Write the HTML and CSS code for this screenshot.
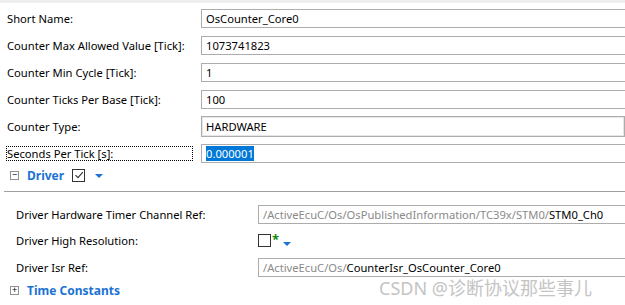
FILE: index.html
```html
<!DOCTYPE html>
<html lang="en">

<head>
    <meta charset="UTF-8">
    <title>OsCounter</title>
    <link rel="stylesheet" href="styles.css">
</head>

<body>
    <div class="topbar"></div>
    <div class="form">
        <div class="row">
            <label>Short Name:</label>
            <div class="field">OsCounter_Core0</div>
        </div>
        <div class="row">
            <label>Counter Max Allowed Value [Tick]:</label>
            <div class="field">1073741823</div>
        </div>
        <div class="row">
            <label>Counter Min Cycle [Tick]:</label>
            <div class="field">1</div>
        </div>
        <div class="row">
            <label>Counter Ticks Per Base [Tick]:</label>
            <div class="field">100</div>
        </div>
        <div class="row">
            <label>Counter Type:</label>
            <div class="field combo">HARDWARE</div>
        </div>
        <div class="row">
            <label class="focus">Seconds Per Tick [s]:</label>
            <div class="field"><span class="sel">0.000001</span></div>
        </div>
    </div>

    <div class="section">
        <span class="toggle">−</span>
        <span class="title">Driver</span>
        <span class="check on">
            <svg width="10" height="10" viewBox="0 0 10 10"><path d="M1.5 5.2 L4 7.6 L8.8 2.2" fill="none" stroke="#333" stroke-width="1.1"/></svg>
        </span>
        <span class="arrow"></span>
    </div>
    <div class="divider"></div>

    <div class="sub">
        <div class="row">
            <label>Driver Hardware Timer Channel Ref:</label>
            <div class="field ref"><span class="path">/ActiveEcuC/Os/OsPublishedInformation/TC39x/STM0/</span>STM0_Ch0</div>
        </div>
        <div class="row">
            <label>Driver High Resolution:</label>
            <div class="flag">
                <span class="check"></span>
                <span class="star">*</span>
                <span class="arrow"></span>
            </div>
        </div>
        <div class="row">
            <label>Driver Isr Ref:</label>
            <div class="field ref"><span class="path">/ActiveEcuC/Os/</span>CounterIsr_OsCounter_Core0</div>
        </div>
    </div>

    <div class="section last">
        <span class="toggle">+</span>
        <span class="title">Time Constants</span>
    </div>

    <div class="mark">CSDN @诊断协议那些事儿</div>
</body>

</html>
```
FILE: styles.css
```css
body {
    margin: 0;
    width: 625px;
    height: 305px;
    overflow: hidden;
    background: #fff;
    font-family: "Noto Sans", "Noto Sans CJK SC", sans-serif;
    font-size: 11.2px;
    color: #000;
    position: relative;
}

.topbar {
    height: 3px;
    background: #eeeeee;
}

.form {
    padding: 2px 0 0 7px;
}

.row {
    display: flex;
    align-items: center;
    height: 27px;
}

.row>label {
    width: 194px;
    flex: none;
    white-space: nowrap;
}

.field {
    flex: 1;
    height: 19px;
    box-sizing: border-box;
    border: 1px solid #acacac;
    border-right: none;
    padding: 0 4px;
    line-height: 17px;
    white-space: nowrap;
}

.combo {
    height: 21px;
    border: 1px solid #acacac;
    box-shadow: inset 0 0 0 1px #e6e6e6;
    line-height: 19px;
}

.focus {
    outline: 1px dotted #000;
    outline-offset: -1px;
    margin-left: -1px;
    padding-left: 1px;
    width: 186px !important;
    margin-right: 8px;
    line-height: 15px;
}

.sel {
    background: #0078d7;
    color: #fff;
}

.section {
    display: flex;
    align-items: center;
    height: 16px;
    padding-left: 10px;
}

.toggle {
    width: 9px;
    height: 9px;
    box-sizing: border-box;
    border: 1px solid #919191;
    font-size: 9px;
    line-height: 6px;
    text-align: center;
    color: #000;
    margin-right: 8px;
}

.title {
    color: #1a72d3;
    font-weight: bold;
    font-size: 12px;
}

.check {
    display: inline-flex;
    align-items: center;
    justify-content: center;
    width: 13px;
    height: 13px;
    box-sizing: border-box;
    border: 1px solid #333;
    background: #fff;
}

.section .check {
    margin-left: 8px;
}

.arrow {
    width: 0;
    height: 0;
    border-left: 4px solid transparent;
    border-right: 4px solid transparent;
    border-top: 4px solid #1a72d3;
    margin-left: 10px;
    margin-top: 2px;
}

.divider {
    margin: 8px 0 0 4px;
    height: 1px;
    background: #a0a0a0;
}

.sub {
    padding: 9px 0 0 16px;
}

.sub .row>label {
    width: 242px;
}

.sub .row {
    height: 26.5px;
}

.path {
    color: #8a8a8a;
}

.flag {
    display: flex;
    align-items: center;
}

.star {
    color: #138a13;
    font-weight: bold;
    font-size: 13px;
    line-height: 10px;
    align-self: flex-start;
    margin-left: 1px;
}

.flag .arrow {
    margin-left: 4px;
    margin-top: 6px;
}

.section.last {
    height: 20px;
}

.mark {
    position: absolute;
    left: 379px;
    top: 274px;
    font-size: 18px;
    color: #c4c4c4;
    white-space: nowrap;
}
```
